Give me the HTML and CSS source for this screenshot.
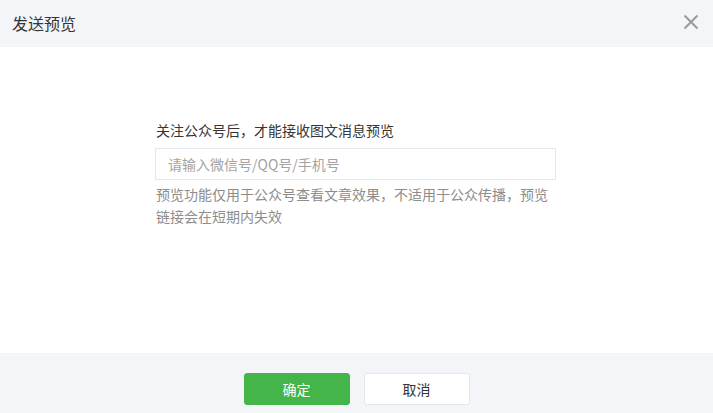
FILE: index.html
```html
<!DOCTYPE html>
<html lang="zh-CN">
<head>
    <meta charset="UTF-8">
    <title>发送预览</title>
    <link rel="stylesheet" href="styles.css">
</head>
<body>
    <div class="dialog">
        <div class="dialog-hd">
            <h3 class="dialog-title">发送预览</h3>
            <span class="dialog-close">
                <svg width="16" height="16" viewBox="0 0 16 16"><path d="M1.5 1.5 L14.5 14.5 M14.5 1.5 L1.5 14.5" stroke="#9a9a9a" stroke-width="2" fill="none"/></svg>
            </span>
        </div>
        <div class="dialog-bd">
            <div class="preview-form">
                <label class="frm-label">关注公众号后，才能接收图文消息预览</label>
                <input class="frm-input" type="text" placeholder="请输入微信号/QQ号/手机号">
                <p class="frm-tips">预览功能仅用于公众号查看文章效果，不适用于公众传播，预览链接会在短期内失效</p>
            </div>
        </div>
        <div class="dialog-ft">
            <button class="btn btn-primary">确定</button>
            <button class="btn btn-default">取消</button>
        </div>
    </div>
</body>
</html>
```

FILE: styles.css
```css
body {
    margin: 0;
    padding: 0;
    font-family: "Noto Sans CJK SC", "Liberation Sans", sans-serif;
    background-color: #fff;
}
.dialog {
    width: 713px;
    height: 413px;
    display: flex;
    flex-direction: column;
}
.dialog-hd {
    height: 47px;
    background-color: #f4f5f9;
    display: flex;
    align-items: center;
    justify-content: space-between;
    padding: 0 14px 0 12px;
}
.dialog-title {
    margin: 0;
    font-size: 16px;
    font-weight: normal;
    color: #353535;
    line-height: 20px;
    padding-bottom: 2px;
}
.dialog-close {
    display: flex;
    padding-bottom: 4px;
}
.dialog-bd {
    flex: 1;
    padding-top: 71px;
}
.preview-form {
    width: 401px;
    margin-left: 155px;
}
.frm-label {
    display: block;
    font-size: 14px;
    color: #353535;
    line-height: 24px;
    margin-bottom: 6px;
    padding-left: 1px;
}
.frm-input {
    display: block;
    box-sizing: border-box;
    width: 401px;
    height: 32px;
    border: 1px solid #e4e8eb;
    padding: 0 12px;
    font-family: inherit;
    font-size: 14px;
    outline: none;
}
.frm-input::placeholder {
    color: #a3a3a3;
}
.frm-tips {
    margin: 3px 0 0;
    padding-left: 1px;
    font-size: 14px;
    line-height: 22px;
    color: #8d8d8d;
    width: 396px;
}
.dialog-ft {
    height: 60px;
    background-color: #f4f5f9;
    display: flex;
    justify-content: center;
    align-items: flex-start;
    gap: 14px;
    padding-top: 20px;
    box-sizing: border-box;
}
.btn {
    width: 106px;
    height: 32px;
    border-radius: 3px;
    font-family: inherit;
    font-size: 14px;
    cursor: pointer;
}
.btn-primary {
    background-color: #44b549;
    border: 1px solid #44b549;
    color: #fff;
}
.btn-default {
    background-color: #fff;
    border: 1px solid #e4e8eb;
    color: #353535;
}
```
